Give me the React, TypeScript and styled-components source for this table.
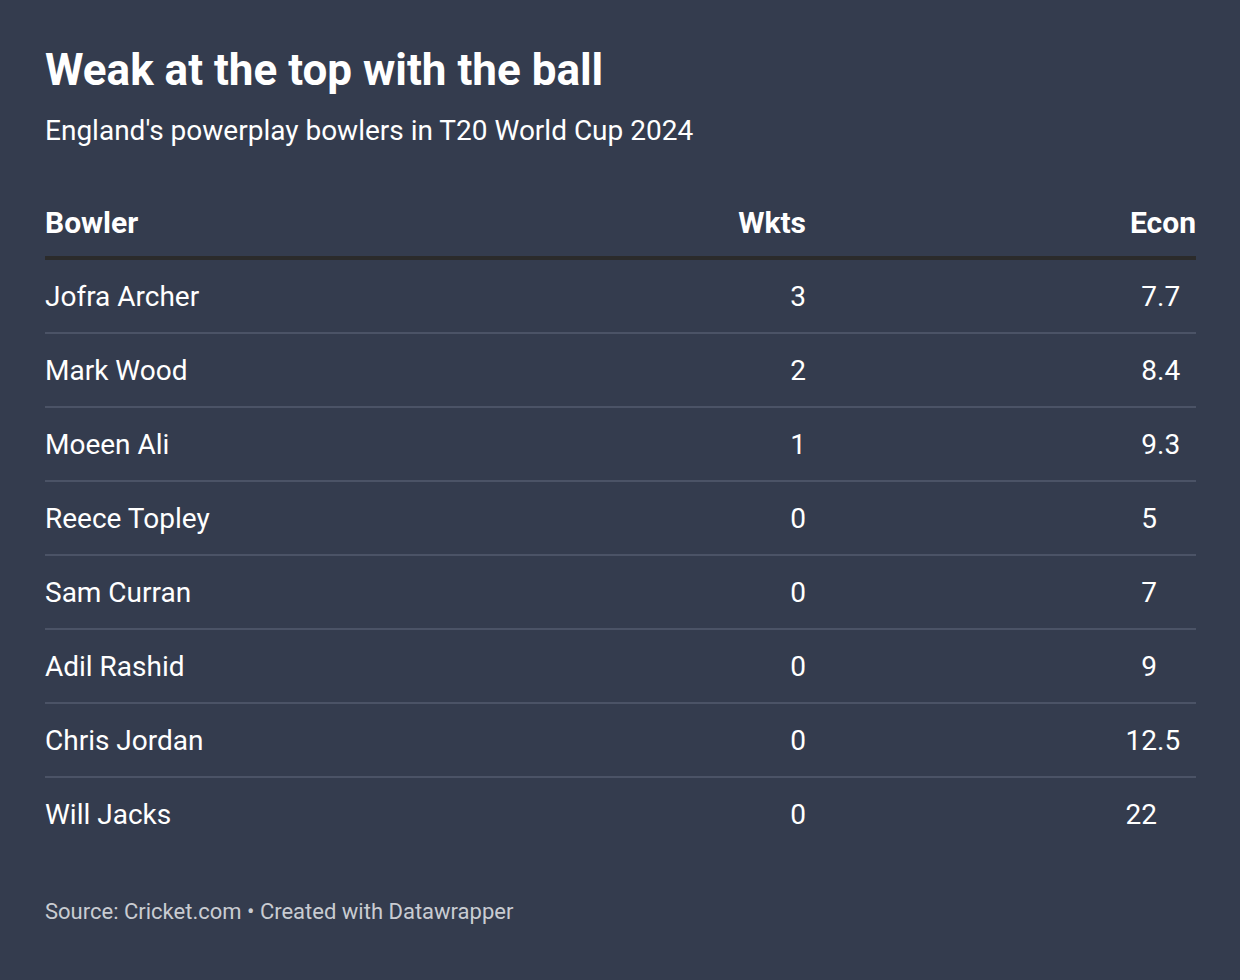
import React from "react";
import styled, { createGlobalStyle } from "styled-components";

const Global = createGlobalStyle`
  html, body { margin: 0; padding: 0; background: #343c4e; }
  body { font-family: Roboto, "Liberation Sans", sans-serif; color: #ffffff; }
`;

const Page = styled.div`
  width: 1240px;
  height: 980px;
  box-sizing: border-box;
  padding: 42px 44px 0 45px;
  background: #343c4e;
  display: flex;
  flex-direction: column;
`;

const Title = styled.h1`
  margin: 0;
  font-size: 44px;
  font-weight: 700;
  line-height: 56px;
  letter-spacing: 0;
`;

const Subtitle = styled.p`
  margin: 16px 0 0;
  font-size: 28px;
  line-height: 34px;
  font-weight: 400;
`;

const Table = styled.div`
  margin-top: 53px;
  display: flex;
  flex-direction: column;
`;

const Row = styled.div<{ $head?: boolean; $last?: boolean }>`
  display: grid;
  grid-template-columns: 1fr 300px 390px;
  align-items: center;
  height: ${(p) => (p.$head ? "42px" : "72px")};
  border-bottom: ${(p) =>
    p.$head ? "4px solid #2b2b2b" : p.$last ? "none" : "2px solid #4b5366"};
  font-size: ${(p) => (p.$head ? "30px" : "28px")};
  font-weight: ${(p) => (p.$head ? 700 : 400)};
  padding-bottom: ${(p) => (p.$head ? "13px" : "0")};
`;

const Cell = styled.div<{ $align?: "left" | "right" }>`
  text-align: ${(p) => p.$align || "left"};
  white-space: nowrap;
`;

const Decimal = styled.div`
  display: flex;
  justify-content: flex-end;
  padding-right: 15px;
`;

const IntPart = styled.span`
  text-align: right;
`;

const FracPart = styled.span`
  display: inline-block;
  width: 24px;
  text-align: left;
`;

const Footer = styled.div`
  margin-top: 49px;
  font-size: 22px;
  line-height: 26px;
  color: #c9ccd2;
`;

const rows: [string, number, string][] = [
  ["Jofra Archer", 3, "7.7"],
  ["Mark Wood", 2, "8.4"],
  ["Moeen Ali", 1, "9.3"],
  ["Reece Topley", 0, "5"],
  ["Sam Curran", 0, "7"],
  ["Adil Rashid", 0, "9"],
  ["Chris Jordan", 0, "12.5"],
  ["Will Jacks", 0, "22"],
];

export default function App() {
  return (
    <>
      <Global />
      <Page>
        <Title>Weak at the top with the ball</Title>
        <Subtitle>England's powerplay bowlers in T20 World Cup 2024</Subtitle>
        <Table>
          <Row $head>
            <Cell>Bowler</Cell>
            <Cell $align="right">Wkts</Cell>
            <Cell $align="right">Econ</Cell>
          </Row>
          {rows.map(([name, w, e], i) => {
            const [ip, fp] = e.split(".");
            return (
              <Row key={name} $last={i === rows.length - 1}>
                <Cell>{name}</Cell>
                <Cell $align="right">{w}</Cell>
                <Decimal>
                  <IntPart>{ip}</IntPart>
                  <FracPart>{fp ? "." + fp : ""}</FracPart>
                </Decimal>
              </Row>
            );
          })}
        </Table>
        <Footer>Source: Cricket.com • Created with Datawrapper</Footer>
      </Page>
    </>
  );
}
